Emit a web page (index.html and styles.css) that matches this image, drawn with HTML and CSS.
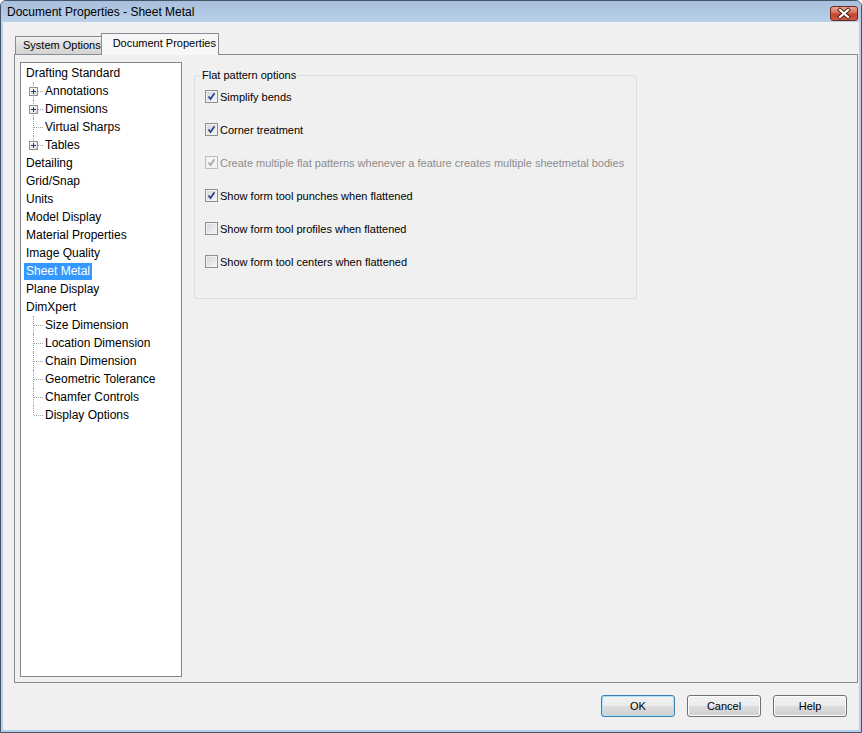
FILE: index.html
```html
<!DOCTYPE html>
<html lang="en">
<head>
    <meta charset="UTF-8">
    <title>Document Properties - Sheet Metal</title>
    <link rel="stylesheet" href="styles.css">
</head>
<body>
    <div class="window">
        <div class="titlebar">
            <span class="title">Document Properties - Sheet Metal</span>
            <button class="close">
                <svg width="26" height="13" viewBox="0 0 26 13">
                    <path d="M9 3 L17 10 M17 3 L9 10" stroke="#4a1c14" stroke-width="4" stroke-linecap="square"/>
                    <path d="M9 3 L17 10 M17 3 L9 10" stroke="#ffffff" stroke-width="2.2" stroke-linecap="square"/>
                </svg>
            </button>
        </div>
        <div class="client">
            <div class="tabs">
                <div class="tab">System Options</div>
                <div class="tab active">Document Properties</div>
            </div>
            <div class="tabpanel">
                <ul class="tree">
                    <li class="node"><span class="label">Drafting Standard</span></li>
                    <li class="node"><span class="branch"><span class="expander"><svg width="9" height="9" viewBox="0 0 9 9"><path d="M2 4.5 H7 M4.5 2 V7" stroke="#1e3a6e" stroke-width="1"/></svg></span></span><span class="label">Annotations</span></li>
                    <li class="node"><span class="branch"><span class="expander"><svg width="9" height="9" viewBox="0 0 9 9"><path d="M2 4.5 H7 M4.5 2 V7" stroke="#1e3a6e" stroke-width="1"/></svg></span></span><span class="label">Dimensions</span></li>
                    <li class="node"><span class="branch"></span><span class="label">Virtual Sharps</span></li>
                    <li class="node"><span class="branch last"><span class="expander"><svg width="9" height="9" viewBox="0 0 9 9"><path d="M2 4.5 H7 M4.5 2 V7" stroke="#1e3a6e" stroke-width="1"/></svg></span></span><span class="label">Tables</span></li>
                    <li class="node"><span class="label">Detailing</span></li>
                    <li class="node"><span class="label">Grid/Snap</span></li>
                    <li class="node"><span class="label">Units</span></li>
                    <li class="node"><span class="label">Model Display</span></li>
                    <li class="node"><span class="label">Material Properties</span></li>
                    <li class="node"><span class="label">Image Quality</span></li>
                    <li class="node"><span class="label selected">Sheet Metal</span></li>
                    <li class="node"><span class="label">Plane Display</span></li>
                    <li class="node"><span class="label">DimXpert</span></li>
                    <li class="node"><span class="branch"></span><span class="label">Size Dimension</span></li>
                    <li class="node"><span class="branch"></span><span class="label">Location Dimension</span></li>
                    <li class="node"><span class="branch"></span><span class="label">Chain Dimension</span></li>
                    <li class="node"><span class="branch"></span><span class="label">Geometric Tolerance</span></li>
                    <li class="node"><span class="branch"></span><span class="label">Chamfer Controls</span></li>
                    <li class="node"><span class="branch last"></span><span class="label">Display Options</span></li>
                </ul>
                <div class="page">
                    <fieldset class="group">
                        <legend>Flat pattern options</legend>
                        <label class="check"><span class="box"><svg width="11" height="11" viewBox="0 0 11 11"><path d="M2.5 5.5 L4.5 8 L8.5 2.2" fill="none" stroke="#2b3f8f" stroke-width="1.7"/></svg></span>Simplify bends</label>
                        <label class="check"><span class="box"><svg width="11" height="11" viewBox="0 0 11 11"><path d="M2.5 5.5 L4.5 8 L8.5 2.2" fill="none" stroke="#2b3f8f" stroke-width="1.7"/></svg></span>Corner treatment</label>
                        <label class="check disabled"><span class="box"><svg width="11" height="11" viewBox="0 0 11 11"><path d="M2.5 5.5 L4.5 8 L8.5 2.2" fill="none" stroke="#a9a9a9" stroke-width="1.7"/></svg></span>Create multiple flat patterns whenever a feature creates multiple sheetmetal bodies</label>
                        <label class="check"><span class="box"><svg width="11" height="11" viewBox="0 0 11 11"><path d="M2.5 5.5 L4.5 8 L8.5 2.2" fill="none" stroke="#2b3f8f" stroke-width="1.7"/></svg></span>Show form tool punches when flattened</label>
                        <label class="check"><span class="box"></span>Show form tool profiles when flattened</label>
                        <label class="check"><span class="box"></span>Show form tool centers when flattened</label>
                    </fieldset>
                </div>
            </div>
            <div class="buttons">
                <button class="btn default">OK</button>
                <button class="btn">Cancel</button>
                <button class="btn">Help</button>
            </div>
        </div>
    </div>
</body>
</html>
```

FILE: styles.css
```css
body {
    margin: 0;
    padding: 0;
    font-family: "Liberation Sans", Arial, sans-serif;
    background: #ffffff;
}
.window {
    width: 862px;
    height: 733px;
    box-sizing: border-box;
    border: 1px solid #44556a;
    border-radius: 6px 6px 0 0;
    display: flex;
    flex-direction: column;
    background: #b9cfe9;
}
.titlebar {
    height: 21px;
    display: flex;
    align-items: center;
    justify-content: space-between;
    padding: 0 3px 0 6px;
    background: linear-gradient(#a7bfdd, #bad0ea);
    border-radius: 5px 5px 0 0;
}
.title {
    font-size: 12px;
    color: #000;
}
.close {
    width: 28px;
    height: 15px;
    margin-top: 3px;
    padding: 0;
    border: 1px solid #6e2a20;
    border-radius: 3px;
    background: linear-gradient(#eaa796 0%, #d86e58 45%, #c4432b 55%, #cf5a3e 100%);
    display: flex;
    align-items: center;
    justify-content: center;
}
.client {
    flex: 1;
    display: flex;
    flex-direction: column;
    background: #f0f0f0;
    margin: 0 2px 2px 2px;
    padding: 12px 1px 0 11px;
}
.tabs {
    display: flex;
    align-items: flex-end;
    height: 20px;
    padding-left: 1px;
}
.tab {
    font-size: 11px;
    height: 17px;
    line-height: 17px;
    padding: 0 0 0 7px;
    border: 1px solid #898c95;
    border-bottom: none;
    background: linear-gradient(#f2f2f2, #dedede 50%, #d4d4d4);
}
.tab.active {
    height: 21px;
    line-height: 19px;
    margin-bottom: -1px;
    margin-left: -1px;
    padding: 0 2px 0 11px;
    background: #f7f7f7;
    position: relative;
}
.tabpanel {
    flex: 1;
    display: flex;
    border: 1px solid #898c95;
    padding: 7px 0 5px 5px;
    background: #f0f0f0;
}
.tree {
    list-style: none;
    margin: 0;
    padding: 1px 0 0 0;
    width: 160px;
    border: 1px solid #828790;
    background: #fff;
    font-size: 12px;
}
.node {
    height: 18px;
    display: flex;
    align-items: center;
}
.label {
    line-height: 17px;
    padding: 0 2px;
    margin-left: 3px;
    color: #000;
    white-space: nowrap;
}
.branch + .label {
    margin-left: 0;
}
.label.selected {
    background: #3399ff;
    color: #fff;
}
.branch {
    position: relative;
    width: 22px;
    height: 18px;
    flex: none;
}
.branch::before {
    content: '';
    position: absolute;
    left: 12px;
    top: 0;
    bottom: 0;
    border-left: 1px dotted #a0a0a0;
}
.branch.last::before {
    bottom: 9px;
}
.branch::after {
    content: '';
    position: absolute;
    left: 13px;
    top: 9px;
    width: 9px;
    border-top: 1px dotted #a0a0a0;
}
.expander {
    position: absolute;
    left: 8px;
    top: 5px;
    width: 9px;
    height: 9px;
    box-sizing: border-box;
    border: 1px solid #919191;
    background: linear-gradient(135deg, #ffffff, #dcdcdc);
    z-index: 1;
    display: flex;
}
.expander svg {
    margin: -1px;
}
.page {
    padding: 6px 0 0 12px;
}
.group {
    width: 421px;
    margin: 0;
    padding: 8px 10px 10px 10px;
    border: 1px solid #d5dfe5;
    border-radius: 3px;
    font-size: 11px;
}
.group legend {
    line-height: 14px;
    padding: 0 2px;
    margin-left: -5px;
}
.check {
    display: flex;
    align-items: center;
    height: 13px;
    margin-bottom: 20px;
    white-space: nowrap;
    color: #000;
}
.check.disabled {
    color: #8c8c8c;
}
.box {
    width: 13px;
    height: 13px;
    box-sizing: border-box;
    border: 1px solid #8f8f8f;
    background: linear-gradient(135deg, #d2d4d6, #f7f7f7);
    box-shadow: inset 0 0 0 1px #f2f2f2;
    margin-right: 2px;
    display: flex;
    align-items: center;
    justify-content: center;
}
.check.disabled .box {
    border-color: #bdbdbd;
    background: #f4f4f4;
}
.buttons {
    display: flex;
    justify-content: flex-end;
    gap: 12px;
    margin: 12px 11px 13px 0;
}
.btn {
    width: 74px;
    height: 22px;
    padding: 0;
    font-family: "Liberation Sans", Arial, sans-serif;
    font-size: 11px;
    color: #000;
    border: 1px solid #707070;
    border-radius: 3px;
    background: linear-gradient(#f2f2f2 0%, #ebebeb 50%, #dddddd 51%, #cfcfcf 100%);
    box-shadow: inset 0 0 0 1px #fcfcfc;
}
.btn.default {
    border-color: #3c7fb1;
    box-shadow: inset 0 0 0 1px #aee2f8;
}
```
